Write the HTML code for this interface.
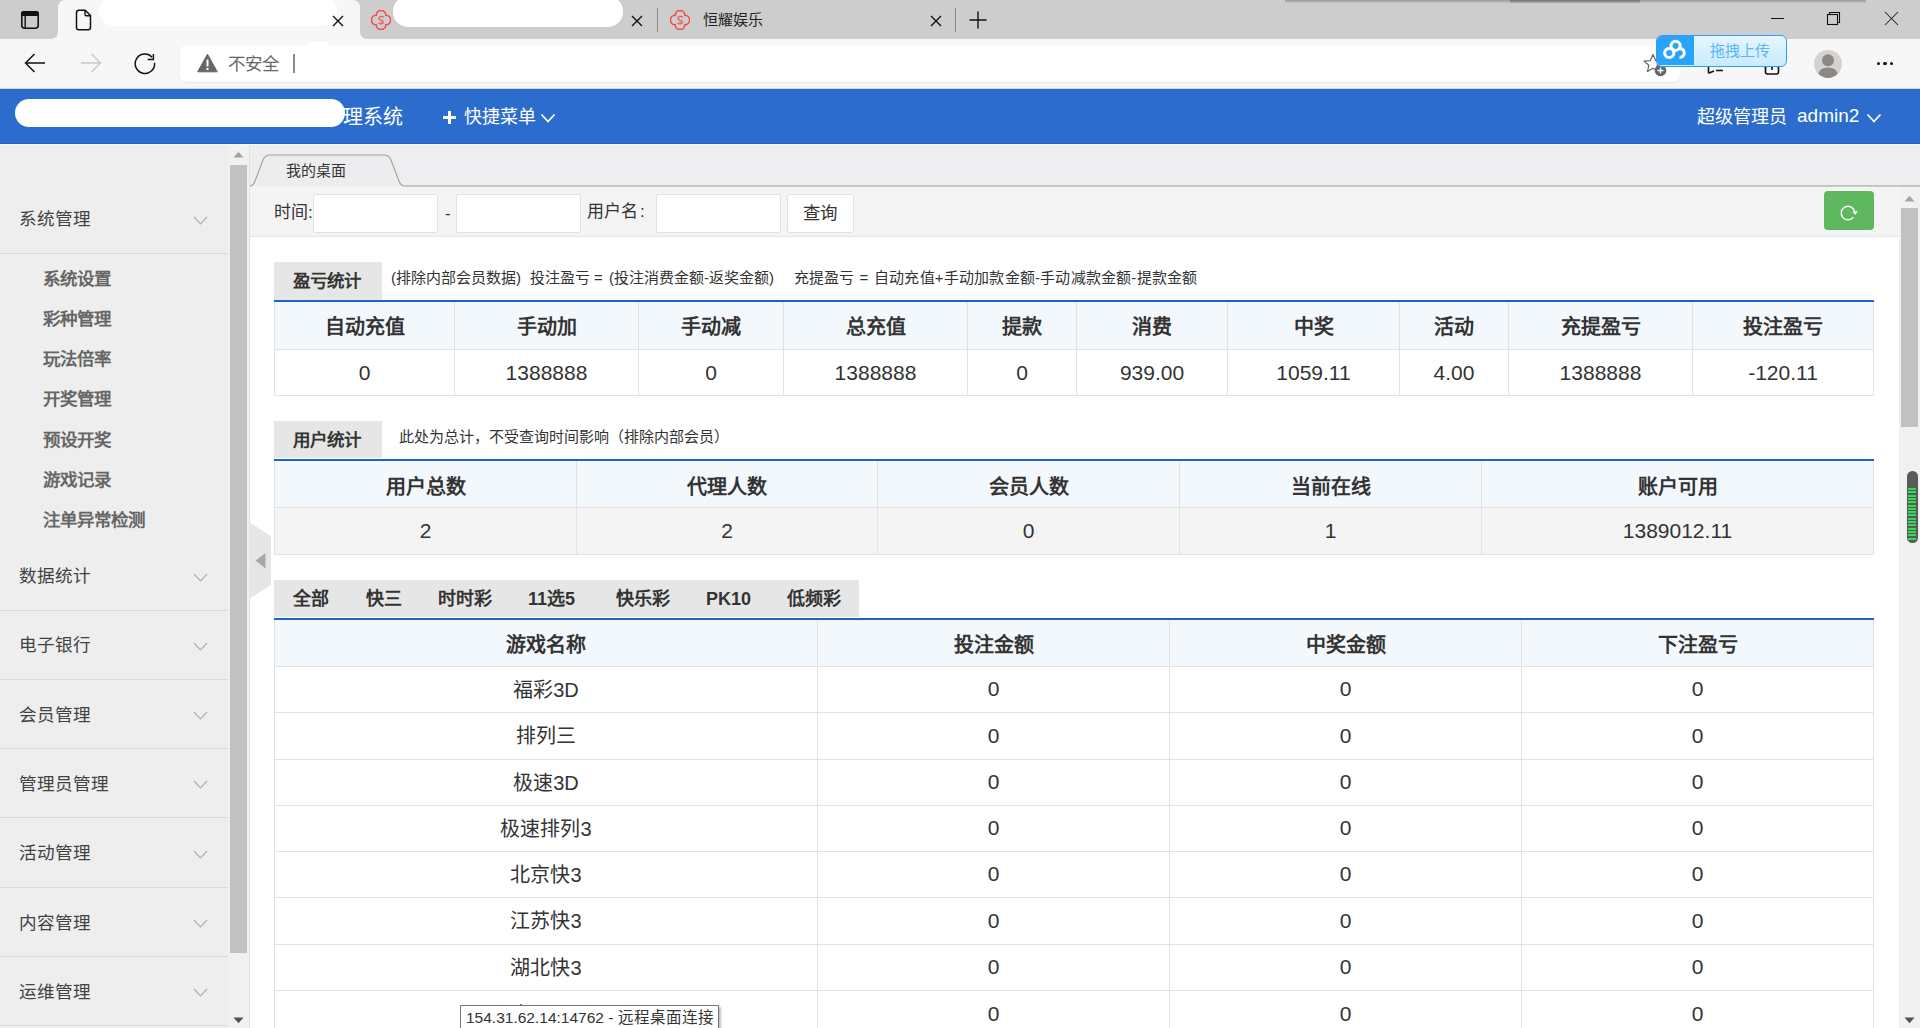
<!DOCTYPE html>
<html lang="zh-CN"><head><meta charset="utf-8"><style>
*{margin:0;padding:0;box-sizing:border-box}
html,body{width:1920px;height:1028px;overflow:hidden;background:#fff;font-family:"Liberation Sans",sans-serif;color:#333}
.a{position:absolute}
.t{position:absolute;white-space:nowrap;line-height:20px}
.c{position:absolute;white-space:nowrap;line-height:20px;text-align:center}
.menu{left:19px;font-size:17.6px;color:#424242}
.sub{left:43px;font-size:17.5px;font-weight:bold;color:#666}
.hl{position:absolute;height:1px;background:#e2e2e2}
.vl{position:absolute;width:1px;background:#e2e2e2}
.th{font-size:20px;font-weight:bold;color:#333}
.td{font-size:20px;color:#333}
.td.n{font-size:21px}
.sechd{position:absolute;background:#e6e6e6;font-size:18px;font-weight:bold;color:#333}
.desc{font-size:15px;color:#333}
.inp{position:absolute;background:#fff;border:1px solid #e2e2e2;border-radius:2px}
</style></head><body>
<div class="a" style="left:0px;top:0px;width:1920px;height:39px;background:#cdcdcd;"></div>
<div class="a" style="left:0px;top:39px;width:1920px;height:50px;background:#f7f7f7;"></div>
<div class="a" style="left:0px;top:89px;width:1920px;height:55px;background:#2c6ccd;"></div>
<div class="a" style="left:0px;top:88px;width:1920px;height:1px;background:#ddd5cc;"></div>
<div class="a" style="left:0px;top:89px;width:1920px;height:1px;background:#2566cb;"></div>
<div class="a" style="left:0px;top:143px;width:1920px;height:1px;background:#1f5fc6;"></div>
<div class="a" style="left:0px;top:144px;width:229px;height:884px;background:#eeeeee;"></div>
<div class="a" style="left:228px;top:144px;width:21px;height:884px;background:#f1f1f1;"></div>
<div class="a" style="left:230px;top:165px;width:17px;height:788px;background:#c1c1c1;"></div>
<div class="a" style="left:249px;top:144px;width:1px;height:884px;background:#e2e2e2;"></div>
<div class="a" style="left:250px;top:144px;width:1670px;height:42px;background:#eeeef0;"></div>
<div class="a" style="left:0px;top:144px;width:1920px;height:1px;background:#f8f5f2;"></div>
<div class="a" style="left:250px;top:185px;width:1670px;height:2px;background:linear-gradient(#bdbdbd,#cfcfcf);"></div>
<div class="a" style="left:250px;top:186px;width:1649px;height:50px;background:#f4f4f4;"></div>
<div class="a" style="left:250px;top:236px;width:1649px;height:1px;background:#e6e6e6;"></div>
<div class="a" style="left:250px;top:237px;width:1649px;height:791px;background:#ffffff;"></div>
<div class="a" style="left:1899px;top:186px;width:21px;height:842px;background:#f1f1f1;"></div>
<div class="a" style="left:1901px;top:208px;width:17px;height:219px;background:#c1c1c1;"></div>
<div class="t menu" style="left:19px;top:209.00px;line-height:20px;">系统管理</div>
<svg class="a" style="left:193px;top:215.5px;width:15px;height:9px" viewBox="0 0 15 9"><path d="M1 1L7.5 7.8L14 1" fill="none" stroke="#b0b0b0" stroke-width="1.2"/></svg>
<div class="a" style="left:0px;top:253px;width:228px;height:1px;background:#d9d9d9;"></div>
<div class="t menu" style="left:19px;top:566.00px;line-height:20px;">数据统计</div>
<svg class="a" style="left:193px;top:572.5px;width:15px;height:9px" viewBox="0 0 15 9"><path d="M1 1L7.5 7.8L14 1" fill="none" stroke="#b0b0b0" stroke-width="1.2"/></svg>
<div class="a" style="left:0px;top:610px;width:228px;height:1px;background:#d9d9d9;"></div>
<div class="t menu" style="left:19px;top:635.40px;line-height:20px;">电子银行</div>
<svg class="a" style="left:193px;top:641.9px;width:15px;height:9px" viewBox="0 0 15 9"><path d="M1 1L7.5 7.8L14 1" fill="none" stroke="#b0b0b0" stroke-width="1.2"/></svg>
<div class="a" style="left:0px;top:679px;width:228px;height:1px;background:#d9d9d9;"></div>
<div class="t menu" style="left:19px;top:704.90px;line-height:20px;">会员管理</div>
<svg class="a" style="left:193px;top:711.4px;width:15px;height:9px" viewBox="0 0 15 9"><path d="M1 1L7.5 7.8L14 1" fill="none" stroke="#b0b0b0" stroke-width="1.2"/></svg>
<div class="a" style="left:0px;top:748px;width:228px;height:1px;background:#d9d9d9;"></div>
<div class="t menu" style="left:19px;top:773.70px;line-height:20px;">管理员管理</div>
<svg class="a" style="left:193px;top:780.2px;width:15px;height:9px" viewBox="0 0 15 9"><path d="M1 1L7.5 7.8L14 1" fill="none" stroke="#b0b0b0" stroke-width="1.2"/></svg>
<div class="a" style="left:0px;top:817px;width:228px;height:1px;background:#d9d9d9;"></div>
<div class="t menu" style="left:19px;top:843.00px;line-height:20px;">活动管理</div>
<svg class="a" style="left:193px;top:849.5px;width:15px;height:9px" viewBox="0 0 15 9"><path d="M1 1L7.5 7.8L14 1" fill="none" stroke="#b0b0b0" stroke-width="1.2"/></svg>
<div class="a" style="left:0px;top:887px;width:228px;height:1px;background:#d9d9d9;"></div>
<div class="t menu" style="left:19px;top:912.70px;line-height:20px;">内容管理</div>
<svg class="a" style="left:193px;top:919.2px;width:15px;height:9px" viewBox="0 0 15 9"><path d="M1 1L7.5 7.8L14 1" fill="none" stroke="#b0b0b0" stroke-width="1.2"/></svg>
<div class="a" style="left:0px;top:956px;width:228px;height:1px;background:#d9d9d9;"></div>
<div class="t menu" style="left:19px;top:981.60px;line-height:20px;">运维管理</div>
<svg class="a" style="left:193px;top:988.1px;width:15px;height:9px" viewBox="0 0 15 9"><path d="M1 1L7.5 7.8L14 1" fill="none" stroke="#b0b0b0" stroke-width="1.2"/></svg>
<div class="a" style="left:0px;top:1025px;width:228px;height:1px;background:#d9d9d9;"></div>
<div class="t sub" style="left:43px;top:269.00px;line-height:20px;">系统设置</div>
<div class="t sub" style="left:43px;top:309.00px;line-height:20px;">彩种管理</div>
<div class="t sub" style="left:43px;top:349.00px;line-height:20px;">玩法倍率</div>
<div class="t sub" style="left:43px;top:389.30px;line-height:20px;">开奖管理</div>
<div class="t sub" style="left:43px;top:429.50px;line-height:20px;">预设开奖</div>
<div class="t sub" style="left:43px;top:469.50px;line-height:20px;">游戏记录</div>
<div class="t sub" style="left:43px;top:509.80px;line-height:20px;">注单异常检测</div>
<div class="a" style="left:1285px;top:0px;width:581px;height:3px;background:linear-gradient(#9a9a9a,#c4c4c4);"></div>
<div class="a" style="left:1510px;top:0px;width:130px;height:3px;background:linear-gradient(#6e6e6e,#b0b0b0);filter:blur(0.6px)"></div>
<svg class="a" style="left:20px;top:10px;width:20px;height:20px;" viewBox="0 0 20 20"><rect x="1.8" y="1.8" width="16.4" height="16.4" rx="3" fill="none" stroke="#111" stroke-width="1.6"/><rect x="1" y="1" width="18" height="5" rx="2.5" fill="#111"/><rect x="1.8" y="4" width="16.4" height="2" fill="#111"/><line x1="5.2" y1="5" x2="5.2" y2="18" stroke="#111" stroke-width="1.4"/></svg>
<svg class="a" style="left:50px;top:0;width:318px;height:39px" viewBox="0 0 318 39"><path d="M0 39 Q8 39 8 31 L8 8 Q8 0 16 0 L302 0 Q310 0 310 8 L310 31 Q310 39 318 39 Z" fill="#f7f7f7"/></svg>
<svg class="a" style="left:75px;top:9px;width:17px;height:22px;" viewBox="0 0 17 22"><path d="M1.5 3.5 Q1.5 1.2 3.8 1.2 L10.2 1.2 L15.5 6.5 L15.5 18.5 Q15.5 20.8 13.2 20.8 L3.8 20.8 Q1.5 20.8 1.5 18.5 Z" fill="none" stroke="#111" stroke-width="1.5" stroke-linejoin="round"/><path d="M10 1.5 L10 5.5 Q10 6.8 11.3 6.8 L15.3 6.8" fill="none" stroke="#111" stroke-width="1.4"/></svg>
<div class="a" style="left:99px;top:-4px;width:238px;height:30px;background:#fff;border-radius:15px"></div>
<svg class="a" style="left:332.0px;top:15.0px;width:12px;height:12px;" viewBox="0 0 12 12"><path d="M1 1L11 11M11 1L1 11" stroke="#111" stroke-width="1.4"/></svg>
<svg class="a" style="left:371px;top:10px;width:20px;height:20px;" viewBox="0 0 20 20"><g fill="none" stroke="#f04a4a" stroke-width="1.45"><path d="M5.2 5.2 A4.8 4.8 0 0 1 14.8 5.2 A4.8 4.8 0 0 1 14.8 14.8 A4.8 4.8 0 0 1 5.2 14.8 A4.8 4.8 0 0 1 5.2 5.2 Z"/><path d="M12.9 7.4 C11.6 5.9 7.6 6.2 7.7 8.4 C7.8 10.4 12.4 9.8 12.4 12.1 C12.4 14.2 8.6 14.4 7.2 12.8" stroke-width="1.25" stroke-opacity="0.85"/><path d="M9 11.9 L11.2 12.6" stroke-width="1" stroke-opacity="0.7"/></g></svg>
<div class="a" style="left:393px;top:-4px;width:230px;height:31px;background:#fff;border-radius:15px"></div>
<svg class="a" style="left:631.0px;top:15.0px;width:12px;height:12px;" viewBox="0 0 12 12"><path d="M1 1L11 11M11 1L1 11" stroke="#111" stroke-width="1.4"/></svg>
<div class="a" style="left:657px;top:8px;width:1px;height:24px;background:#8a8a8a;"></div>
<svg class="a" style="left:670px;top:10px;width:20px;height:20px;" viewBox="0 0 20 20"><g fill="none" stroke="#f04a4a" stroke-width="1.45"><path d="M5.2 5.2 A4.8 4.8 0 0 1 14.8 5.2 A4.8 4.8 0 0 1 14.8 14.8 A4.8 4.8 0 0 1 5.2 14.8 A4.8 4.8 0 0 1 5.2 5.2 Z"/><path d="M12.9 7.4 C11.6 5.9 7.6 6.2 7.7 8.4 C7.8 10.4 12.4 9.8 12.4 12.1 C12.4 14.2 8.6 14.4 7.2 12.8" stroke-width="1.25" stroke-opacity="0.85"/><path d="M9 11.9 L11.2 12.6" stroke-width="1" stroke-opacity="0.7"/></g></svg>
<div class="t " style="left:703px;top:9.50px;line-height:20px;font-size:15px;color:#222">恒耀娱乐</div>
<svg class="a" style="left:929.8px;top:14.5px;width:12px;height:12px;" viewBox="0 0 12 12"><path d="M1 1L11 11M11 1L1 11" stroke="#111" stroke-width="1.4"/></svg>
<div class="a" style="left:955px;top:8px;width:1px;height:24px;background:#8a8a8a;"></div>
<svg class="a" style="left:969px;top:11px;width:18px;height:18px;" viewBox="0 0 18 18"><path d="M9 0.5V17.5M0.5 9H17.5" stroke="#111" stroke-width="1.4"/></svg>
<div class="a" style="left:1771px;top:18px;width:13px;height:1px;background:#111;"></div>
<svg class="a" style="left:1826px;top:11px;width:15px;height:15px;" viewBox="0 0 15 15"><rect x="1.5" y="3.5" width="10" height="10" fill="none" stroke="#111" stroke-width="1.1"/><path d="M3.5 3.5 V1.5 H13.5 V11.5 H11.5" fill="none" stroke="#111" stroke-width="1.1"/></svg>
<svg class="a" style="left:1884.0px;top:11.0px;width:15px;height:15px;" viewBox="0 0 15 15"><path d="M1 1L14 14M14 1L1 14" stroke="#222" stroke-width="1.05"/></svg>
<svg class="a" style="left:24px;top:53px;width:22px;height:20px;" viewBox="0 0 22 20"><path d="M10.5 1 L1.5 10 L10.5 19 M1.5 10 H21" fill="none" stroke="#111" stroke-width="1.5"/></svg>
<svg class="a" style="left:80px;top:53px;width:22px;height:20px;" viewBox="0 0 22 20"><path d="M11.5 1 L20.5 10 L11.5 19 M20.5 10 H1" fill="none" stroke="#c8c8c8" stroke-width="1.5"/></svg>
<svg class="a" style="left:133px;top:52px;width:24px;height:24px;" viewBox="0 0 24 24"><path d="M19.1 5.2 A9.7 9.7 0 1 0 21.55 10.7" fill="none" stroke="#111" stroke-width="1.45"/><path d="M20.4 2 V7.5 H14.6" fill="none" stroke="#111" stroke-width="1.45"/></svg>
<div class="a" style="left:180px;top:45px;width:1500px;height:37px;background:#fff;border-radius:6px;box-shadow:0 1px 2px rgba(0,0,0,0.07)"></div>
<div class="a" style="left:307px;top:41.5px;width:22px;height:6px;background:#fff;border-radius:3px"></div>
<svg class="a" style="left:197px;top:53px;width:21px;height:20px;" viewBox="0 0 21 20"><path d="M10.5 1.2 L20.3 18.8 H0.7 Z" fill="#666" stroke="#666" stroke-width="1" stroke-linejoin="round"/><rect x="9.5" y="6.5" width="2" height="7" fill="#fff"/><rect x="9.5" y="15" width="2" height="2" fill="#fff"/></svg>
<div class="t " style="left:228px;top:53.50px;line-height:20px;font-size:17.5px;color:#666">不安全</div>
<div class="a" style="left:293px;top:54px;width:2px;height:19px;background:#888;"></div>
<svg class="a" style="left:1643px;top:53px;width:24px;height:24px;" viewBox="0 0 24 24"><path d="M10 1.5 L12.6 7.6 L19 8.1 L14.1 12.3 L15.6 18.6 L10 15.2 L4.4 18.6 L5.9 12.3 L1 8.1 L7.4 7.6 Z" fill="none" stroke="#666" stroke-width="1.2" stroke-linejoin="round"/><circle cx="17.5" cy="17.5" r="5.8" fill="#666"/><path d="M17.5 14.5V20.5M14.5 17.5H20.5" stroke="#fff" stroke-width="1.4"/></svg>
<svg class="a" style="left:1706px;top:58px;width:22px;height:18px;" viewBox="0 0 22 18"><path d="M3 15 L8 13 M10 12.5 H17" fill="none" stroke="#111" stroke-width="1.6"/><path d="M2.5 8 V15.5" stroke="#111" stroke-width="1.6"/></svg>
<svg class="a" style="left:1760px;top:58px;width:22px;height:18px;" viewBox="0 0 22 18"><path d="M2 6 L5 9" stroke="#111" stroke-width="1.6"/><rect x="5.5" y="8" width="13" height="8" rx="2" fill="none" stroke="#111" stroke-width="1.6"/><path d="M12 6 V12" stroke="#111" stroke-width="1.6"/></svg>
<svg class="a" style="left:1814px;top:50px;width:28px;height:28px;" viewBox="0 0 28 28"><circle cx="14" cy="14" r="14" fill="#d5d3d0"/><circle cx="14" cy="10.2" r="6" fill="#8c8884"/><path d="M4.3 23.6 Q6 17.6 14 17.6 Q22 17.6 23.7 23.6 Q19.5 28 14 28 Q8.5 28 4.3 23.6 Z" fill="#8c8884"/></svg>
<div class="a" style="left:1876.7px;top:61.9px;width:3.6px;height:3.6px;border-radius:50%;background:#111"></div>
<div class="a" style="left:1883.2px;top:61.9px;width:3.6px;height:3.6px;border-radius:50%;background:#111"></div>
<div class="a" style="left:1889.7px;top:61.9px;width:3.6px;height:3.6px;border-radius:50%;background:#111"></div>
<div class="a" style="left:1656px;top:35px;width:131px;height:32px;border:1.5px solid #2b9ff8;border-radius:6px;background:linear-gradient(#e6f6ff,#c9eafd);overflow:hidden"><div class="a" style="left:0;top:0;width:37px;height:29px;background:#2aa3fb"></div></div>
<svg class="a" style="left:1662px;top:39px;width:28px;height:22px;" viewBox="0 0 28 22"><g fill="none" stroke="#fff" stroke-width="3"><circle cx="13.6" cy="6.8" r="4.6"/><circle cx="7.2" cy="14" r="4.6"/><path d="M17.5 18.6 A4.6 4.6 0 1 0 16.3 9.6"/></g></svg>
<div class="t " style="left:1710px;top:41.00px;line-height:20px;font-size:15px;color:#5cb5f3">拖拽上传</div>
<div class="t " style="left:343px;top:106.50px;line-height:20px;font-size:20px;color:#fff">理系统</div>
<div class="a" style="left:15px;top:99px;width:330px;height:28px;background:#fff;border-radius:14px"></div>
<svg class="a" style="left:442px;top:110px;width:15px;height:15px;" viewBox="0 0 15 15"><path d="M7.5 1V14M1 7.5H14" stroke="#fff" stroke-width="3"/></svg>
<div class="t " style="left:464px;top:106.50px;line-height:20px;font-size:18px;color:#fff">快捷菜单</div>
<svg class="a" style="left:540px;top:113px;width:16px;height:11px;" viewBox="0 0 16 11"><path d="M1.5 1.5L8 8.5L14.5 1.5" fill="none" stroke="#fff" stroke-width="1.8"/></svg>
<div class="t " style="left:1697px;top:107.00px;line-height:20px;font-size:18px;color:#fff">超级管理员</div>
<div class="t " style="left:1797px;top:106.00px;line-height:20px;font-size:19px;color:#fff">admin2</div>
<svg class="a" style="left:1866px;top:113px;width:16px;height:11px;" viewBox="0 0 16 11"><path d="M1.5 1.5L8 8.5L14.5 1.5" fill="none" stroke="#fff" stroke-width="1.8"/></svg>
<svg class="a" style="left:249px;top:154px;width:155px;height:33px;" viewBox="0 0 155 33"><path d="M1 32 Q4 32 6 27 L14 6 Q16 1 21 1 L135 1 Q140 1 142 6 L150 27 Q152 32 155 32" fill="#ededef" stroke="#a0a0a0" stroke-width="1.1"/></svg>
<div class="a" style="left:403px;top:185px;width:1517px;height:2px;background:linear-gradient(#bdbdbd,#cfcfcf);"></div>
<div class="t " style="left:286px;top:160.50px;line-height:20px;font-size:15px;color:#333">我的桌面</div>
<div class="t " style="left:274px;top:202.80px;line-height:20px;font-size:17px;color:#333">时间:</div>
<div class="inp" style="left:313px;top:194px;width:125px;height:39px"></div>
<div class="t " style="left:445px;top:203.50px;line-height:20px;font-size:17px;color:#333">-</div>
<div class="inp" style="left:456px;top:194px;width:125px;height:39px"></div>
<div class="t " style="left:587px;top:202.00px;line-height:20px;font-size:17px;color:#333">用户名</div>
<div class="t " style="left:640px;top:202.00px;line-height:20px;font-size:17px;color:#333">:</div>
<div class="inp" style="left:656px;top:194px;width:125px;height:39px"></div>
<div class="inp" style="left:787px;top:194px;width:67px;height:39px;border-radius:3px"></div>
<div class="t " style="left:803px;top:203.00px;line-height:20px;font-size:17.5px;color:#333">查询</div>
<div class="a" style="left:1824px;top:191px;width:50px;height:39px;background:#5fb760;border-radius:4px"></div>
<svg class="a" style="left:1839px;top:203px;width:19px;height:19px;" viewBox="0 0 19 19"><path d="M14.4 14.2 A6.8 6.8 0 1 1 15.6 8.4" fill="none" stroke="#fff" stroke-width="1.35"/><path d="M13.4 8.8 L18.6 8.0 L16.4 12.0 Z" fill="#fff"/></svg>
<svg class="a" style="left:233px;top:151px;width:11px;height:7px;" viewBox="0 0 11 7"><path d="M0.5 6.5 L5.5 0.8 L10.5 6.5 Z" fill="#a3a3a3"/></svg>
<svg class="a" style="left:233px;top:1016.5px;width:11px;height:7px;" viewBox="0 0 11 7"><path d="M0.5 0.5 L5.5 6.2 L10.5 0.5 Z" fill="#505050"/></svg>
<svg class="a" style="left:1904px;top:195px;width:11px;height:7px;" viewBox="0 0 11 7"><path d="M0.5 6.5 L5.5 0.8 L10.5 6.5 Z" fill="#a3a3a3"/></svg>
<svg class="a" style="left:1904px;top:1016.5px;width:11px;height:7px;" viewBox="0 0 11 7"><path d="M0.5 0.5 L5.5 6.2 L10.5 0.5 Z" fill="#505050"/></svg>
<svg class="a" style="left:249px;top:522px;width:23px;height:78px;" viewBox="0 0 23 78"><path d="M0 0 L22 14 L22 63 L0 77 Z" fill="#e6e6e6"/><path d="M6.5 38.5 L16.5 31 L16.5 46.5 Z" fill="#a8a8a8"/></svg>
<div class="t desc" style="left:391px;top:267.50px;line-height:20px;">(排除内部会员数据)</div>
<div class="t desc" style="left:530px;top:267.50px;line-height:20px;">投注盈亏</div>
<div class="t desc" style="left:594px;top:267.50px;line-height:20px;">=</div>
<div class="t desc" style="left:609px;top:267.50px;line-height:20px;">(投注消费金额-返奖金额)</div>
<div class="t desc" style="left:793.5px;top:267.50px;line-height:20px;">充提盈亏</div>
<div class="t desc" style="left:859.5px;top:267.50px;line-height:20px;">=</div>
<div class="t desc" style="left:874px;top:267.50px;line-height:20px;letter-spacing:0.2px">自动充值+手动加款金额-手动减款金额-提款金额</div>
<div class="t desc" style="left:399px;top:426.50px;line-height:20px;">此处为总计，不受查询时间影响（排除内部会员）</div>
<div class="a" style="left:274px;top:262px;width:108px;height:38px;background:#e6e6e6;"></div>
<div class="t " style="left:293px;top:270.50px;line-height:20px;font-size:17.5px;font-weight:bold;color:#333">盈亏统计</div>
<div class="a" style="left:274px;top:300px;width:1600px;height:2px;background:#1e64c8;"></div>
<div class="a" style="left:274px;top:302px;width:1600px;height:47px;background:#f3f8fd;"></div>
<div class="a" style="left:274px;top:350px;width:1600px;height:45px;background:#ffffff;"></div>
<div class="hl" style="left:274px;top:349px;width:1600px"></div>
<div class="hl" style="left:274px;top:395px;width:1600px"></div>
<div class="vl" style="left:274px;top:302px;height:94px"></div>
<div class="vl" style="left:454px;top:302px;height:94px"></div>
<div class="vl" style="left:638px;top:302px;height:94px"></div>
<div class="vl" style="left:783px;top:302px;height:94px"></div>
<div class="vl" style="left:967px;top:302px;height:94px"></div>
<div class="vl" style="left:1076px;top:302px;height:94px"></div>
<div class="vl" style="left:1227px;top:302px;height:94px"></div>
<div class="vl" style="left:1399px;top:302px;height:94px"></div>
<div class="vl" style="left:1508px;top:302px;height:94px"></div>
<div class="vl" style="left:1692px;top:302px;height:94px"></div>
<div class="vl" style="left:1873px;top:302px;height:94px"></div>
<div class="c th" style="left:164.50px;top:317.00px;width:400px;line-height:20px;">自动充值</div>
<div class="c th" style="left:346.50px;top:317.00px;width:400px;line-height:20px;">手动加</div>
<div class="c th" style="left:511.00px;top:317.00px;width:400px;line-height:20px;">手动减</div>
<div class="c th" style="left:675.50px;top:317.00px;width:400px;line-height:20px;">总充值</div>
<div class="c th" style="left:822.00px;top:317.00px;width:400px;line-height:20px;">提款</div>
<div class="c th" style="left:952.00px;top:317.00px;width:400px;line-height:20px;">消费</div>
<div class="c th" style="left:1113.50px;top:317.00px;width:400px;line-height:20px;">中奖</div>
<div class="c th" style="left:1254.00px;top:317.00px;width:400px;line-height:20px;">活动</div>
<div class="c th" style="left:1400.50px;top:317.00px;width:400px;line-height:20px;">充提盈亏</div>
<div class="c th" style="left:1583.00px;top:317.00px;width:400px;line-height:20px;">投注盈亏</div>
<div class="c td n" style="left:164.50px;top:362.50px;width:400px;line-height:20px;">0</div>
<div class="c td n" style="left:346.50px;top:362.50px;width:400px;line-height:20px;">1388888</div>
<div class="c td n" style="left:511.00px;top:362.50px;width:400px;line-height:20px;">0</div>
<div class="c td n" style="left:675.50px;top:362.50px;width:400px;line-height:20px;">1388888</div>
<div class="c td n" style="left:822.00px;top:362.50px;width:400px;line-height:20px;">0</div>
<div class="c td n" style="left:952.00px;top:362.50px;width:400px;line-height:20px;">939.00</div>
<div class="c td n" style="left:1113.50px;top:362.50px;width:400px;line-height:20px;">1059.11</div>
<div class="c td n" style="left:1254.00px;top:362.50px;width:400px;line-height:20px;">4.00</div>
<div class="c td n" style="left:1400.50px;top:362.50px;width:400px;line-height:20px;">1388888</div>
<div class="c td n" style="left:1583.00px;top:362.50px;width:400px;line-height:20px;">-120.11</div>
<div class="a" style="left:274px;top:421px;width:108px;height:37px;background:#e6e6e6;"></div>
<div class="t " style="left:293px;top:429.50px;line-height:20px;font-size:17.5px;font-weight:bold;color:#333">用户统计</div>
<div class="a" style="left:274px;top:459px;width:1600px;height:2px;background:#1e64c8;"></div>
<div class="a" style="left:274px;top:461px;width:1600px;height:46px;background:#f3f8fd;"></div>
<div class="a" style="left:274px;top:508px;width:1600px;height:46px;background:#f4f4f4;"></div>
<div class="hl" style="left:274px;top:507px;width:1600px"></div>
<div class="hl" style="left:274px;top:554px;width:1600px"></div>
<div class="vl" style="left:274px;top:461px;height:94px"></div>
<div class="vl" style="left:576px;top:461px;height:94px"></div>
<div class="vl" style="left:877px;top:461px;height:94px"></div>
<div class="vl" style="left:1179px;top:461px;height:94px"></div>
<div class="vl" style="left:1481px;top:461px;height:94px"></div>
<div class="vl" style="left:1873px;top:461px;height:94px"></div>
<div class="c th" style="left:225.50px;top:476.50px;width:400px;line-height:20px;">用户总数</div>
<div class="c th" style="left:527.00px;top:476.50px;width:400px;line-height:20px;">代理人数</div>
<div class="c th" style="left:828.50px;top:476.50px;width:400px;line-height:20px;">会员人数</div>
<div class="c th" style="left:1130.50px;top:476.50px;width:400px;line-height:20px;">当前在线</div>
<div class="c th" style="left:1477.50px;top:476.50px;width:400px;line-height:20px;">账户可用</div>
<div class="c td n" style="left:225.50px;top:520.50px;width:400px;line-height:20px;">2</div>
<div class="c td n" style="left:527.00px;top:520.50px;width:400px;line-height:20px;">2</div>
<div class="c td n" style="left:828.50px;top:520.50px;width:400px;line-height:20px;">0</div>
<div class="c td n" style="left:1130.50px;top:520.50px;width:400px;line-height:20px;">1</div>
<div class="c td n" style="left:1477.50px;top:520.50px;width:400px;line-height:20px;">1389012.11</div>
<div class="a" style="left:274px;top:580px;width:585px;height:37px;background:#e6e6e6;"></div>
<div class="t " style="left:293px;top:588.50px;line-height:20px;font-size:18px;font-weight:bold;color:#333">全部</div>
<div class="t " style="left:366px;top:588.50px;line-height:20px;font-size:18px;font-weight:bold;color:#333">快三</div>
<div class="t " style="left:438px;top:588.50px;line-height:20px;font-size:18px;font-weight:bold;color:#333">时时彩</div>
<div class="t " style="left:528px;top:588.50px;line-height:20px;font-size:18px;font-weight:bold;color:#333">11选5</div>
<div class="t " style="left:616px;top:588.50px;line-height:20px;font-size:18px;font-weight:bold;color:#333">快乐彩</div>
<div class="t " style="left:706px;top:588.50px;line-height:20px;font-size:18px;font-weight:bold;color:#333">PK10</div>
<div class="t " style="left:787px;top:588.50px;line-height:20px;font-size:18px;font-weight:bold;color:#333">低频彩</div>
<div class="a" style="left:274px;top:618px;width:1600px;height:2px;background:#1e64c8;"></div>
<div class="a" style="left:274px;top:620px;width:1600px;height:46px;background:#f3f8fd;"></div>
<div class="a" style="left:274px;top:667px;width:1600px;height:45px;background:#ffffff;"></div>
<div class="a" style="left:274px;top:713px;width:1600px;height:46px;background:#ffffff;"></div>
<div class="a" style="left:274px;top:760px;width:1600px;height:45px;background:#ffffff;"></div>
<div class="a" style="left:274px;top:806px;width:1600px;height:45px;background:#ffffff;"></div>
<div class="a" style="left:274px;top:852px;width:1600px;height:45px;background:#ffffff;"></div>
<div class="a" style="left:274px;top:898px;width:1600px;height:46px;background:#ffffff;"></div>
<div class="a" style="left:274px;top:945px;width:1600px;height:45px;background:#ffffff;"></div>
<div class="a" style="left:274px;top:991px;width:1600px;height:46px;background:#ffffff;"></div>
<div class="hl" style="left:274px;top:666px;width:1600px"></div>
<div class="hl" style="left:274px;top:712px;width:1600px"></div>
<div class="hl" style="left:274px;top:759px;width:1600px"></div>
<div class="hl" style="left:274px;top:805px;width:1600px"></div>
<div class="hl" style="left:274px;top:851px;width:1600px"></div>
<div class="hl" style="left:274px;top:897px;width:1600px"></div>
<div class="hl" style="left:274px;top:944px;width:1600px"></div>
<div class="hl" style="left:274px;top:990px;width:1600px"></div>
<div class="hl" style="left:274px;top:1037px;width:1600px"></div>
<div class="vl" style="left:274px;top:620px;height:418px"></div>
<div class="vl" style="left:817px;top:620px;height:418px"></div>
<div class="vl" style="left:1169px;top:620px;height:418px"></div>
<div class="vl" style="left:1521px;top:620px;height:418px"></div>
<div class="vl" style="left:1873px;top:620px;height:418px"></div>
<div class="c th" style="left:346.00px;top:635.00px;width:400px;line-height:20px;">游戏名称</div>
<div class="c th" style="left:793.50px;top:635.00px;width:400px;line-height:20px;">投注金额</div>
<div class="c th" style="left:1145.50px;top:635.00px;width:400px;line-height:20px;">中奖金额</div>
<div class="c th" style="left:1497.50px;top:635.00px;width:400px;line-height:20px;">下注盈亏</div>
<div class="c td" style="left:346.00px;top:679.50px;width:400px;line-height:20px;">福彩3D</div>
<div class="c td n" style="left:793.50px;top:679.00px;width:400px;line-height:20px;">0</div>
<div class="c td n" style="left:1145.50px;top:679.00px;width:400px;line-height:20px;">0</div>
<div class="c td n" style="left:1497.50px;top:679.00px;width:400px;line-height:20px;">0</div>
<div class="c td" style="left:346.00px;top:726.00px;width:400px;line-height:20px;">排列三</div>
<div class="c td n" style="left:793.50px;top:725.50px;width:400px;line-height:20px;">0</div>
<div class="c td n" style="left:1145.50px;top:725.50px;width:400px;line-height:20px;">0</div>
<div class="c td n" style="left:1497.50px;top:725.50px;width:400px;line-height:20px;">0</div>
<div class="c td" style="left:346.00px;top:772.50px;width:400px;line-height:20px;">极速3D</div>
<div class="c td n" style="left:793.50px;top:772.00px;width:400px;line-height:20px;">0</div>
<div class="c td n" style="left:1145.50px;top:772.00px;width:400px;line-height:20px;">0</div>
<div class="c td n" style="left:1497.50px;top:772.00px;width:400px;line-height:20px;">0</div>
<div class="c td" style="left:346.00px;top:818.50px;width:400px;line-height:20px;">极速排列3</div>
<div class="c td n" style="left:793.50px;top:818.00px;width:400px;line-height:20px;">0</div>
<div class="c td n" style="left:1145.50px;top:818.00px;width:400px;line-height:20px;">0</div>
<div class="c td n" style="left:1497.50px;top:818.00px;width:400px;line-height:20px;">0</div>
<div class="c td" style="left:346.00px;top:864.50px;width:400px;line-height:20px;">北京快3</div>
<div class="c td n" style="left:793.50px;top:864.00px;width:400px;line-height:20px;">0</div>
<div class="c td n" style="left:1145.50px;top:864.00px;width:400px;line-height:20px;">0</div>
<div class="c td n" style="left:1497.50px;top:864.00px;width:400px;line-height:20px;">0</div>
<div class="c td" style="left:346.00px;top:911.00px;width:400px;line-height:20px;">江苏快3</div>
<div class="c td n" style="left:793.50px;top:910.50px;width:400px;line-height:20px;">0</div>
<div class="c td n" style="left:1145.50px;top:910.50px;width:400px;line-height:20px;">0</div>
<div class="c td n" style="left:1497.50px;top:910.50px;width:400px;line-height:20px;">0</div>
<div class="c td" style="left:346.00px;top:957.50px;width:400px;line-height:20px;">湖北快3</div>
<div class="c td n" style="left:793.50px;top:957.00px;width:400px;line-height:20px;">0</div>
<div class="c td n" style="left:1145.50px;top:957.00px;width:400px;line-height:20px;">0</div>
<div class="c td n" style="left:1497.50px;top:957.00px;width:400px;line-height:20px;">0</div>
<div class="c td" style="left:346.00px;top:1004.00px;width:400px;line-height:20px;"></div>
<div class="c td n" style="left:793.50px;top:1003.50px;width:400px;line-height:20px;">0</div>
<div class="c td n" style="left:1145.50px;top:1003.50px;width:400px;line-height:20px;">0</div>
<div class="c td n" style="left:1497.50px;top:1003.50px;width:400px;line-height:20px;">0</div>
<div class="a" style="left:520px;top:1004px;width:2px;height:1.5px;background:#777;"></div>
<div class="a" style="left:460px;top:1005px;width:259px;height:30px;background:#fff;border:1px solid #767676;box-shadow:2px 2px 2px rgba(0,0,0,0.25)"></div>
<div class="t " style="left:466px;top:1007.50px;line-height:20px;font-size:15.5px;color:#333">154.31.62.14:14762 - 远程桌面连接</div>
<div class="a" style="left:1906.5px;top:470.5px;width:11px;height:72.5px;border-radius:5.5px;background:#5a5a5a;box-shadow:0 0 1px #ddd"></div>
<div class="a" style="left:1908px;top:488.0px;width:8px;height:2px;background:#35d957;"></div>
<div class="a" style="left:1908px;top:491.3px;width:8px;height:2px;background:#35d957;"></div>
<div class="a" style="left:1908px;top:494.6px;width:8px;height:2px;background:#35d957;"></div>
<div class="a" style="left:1908px;top:497.9px;width:8px;height:2px;background:#35d957;"></div>
<div class="a" style="left:1908px;top:501.2px;width:8px;height:2px;background:#35d957;"></div>
<div class="a" style="left:1908px;top:504.5px;width:8px;height:2px;background:#35d957;"></div>
<div class="a" style="left:1908px;top:507.8px;width:8px;height:2px;background:#35d957;"></div>
<div class="a" style="left:1908px;top:511.1px;width:8px;height:2px;background:#35d957;"></div>
<div class="a" style="left:1908px;top:514.4px;width:8px;height:2px;background:#35d957;"></div>
<div class="a" style="left:1908px;top:517.7px;width:8px;height:2px;background:#35d957;"></div>
<div class="a" style="left:1908px;top:521.0px;width:8px;height:2px;background:#35d957;"></div>
<div class="a" style="left:1908px;top:524.3px;width:8px;height:2px;background:#35d957;"></div>
<div class="a" style="left:1908px;top:527.6px;width:8px;height:2px;background:#35d957;"></div>
<div class="a" style="left:1908px;top:530.9px;width:8px;height:2px;background:#35d957;"></div>
<div class="a" style="left:1908px;top:534.2px;width:8px;height:2px;background:#35d957;"></div>
<div class="a" style="left:1908px;top:537.5px;width:8px;height:2px;background:#35d957;"></div>
</body></html>
